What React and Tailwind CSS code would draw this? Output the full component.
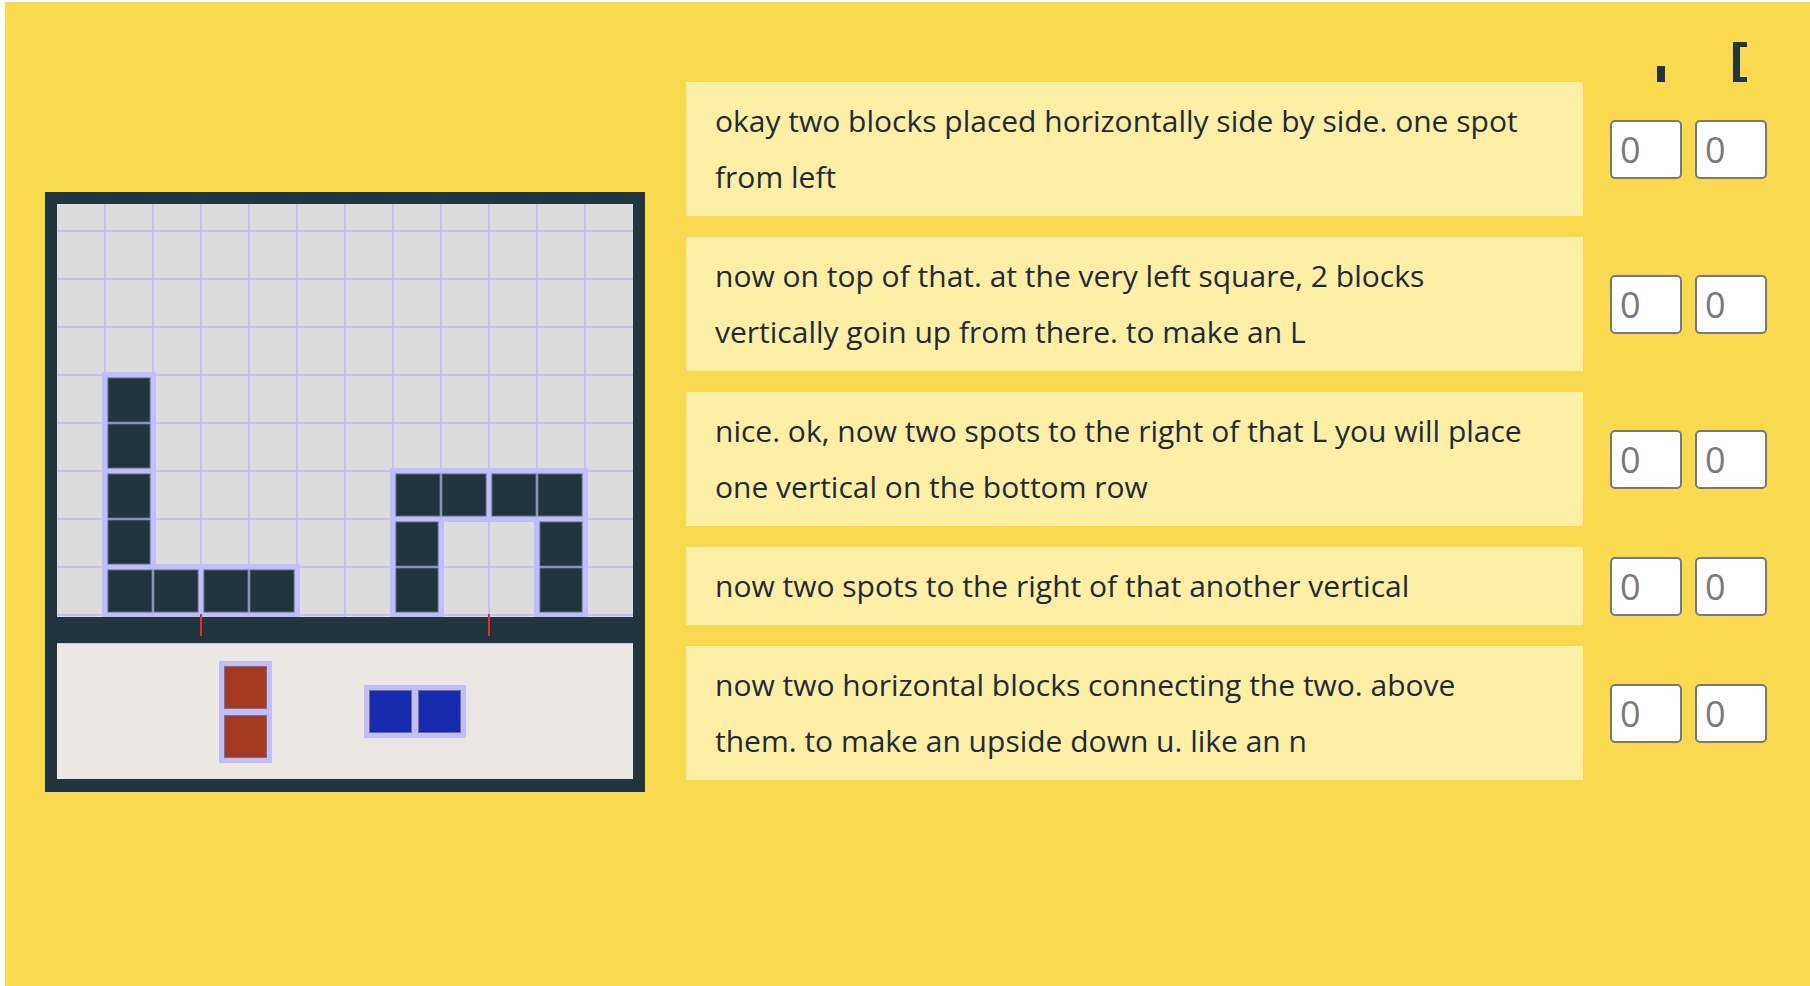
import { useState } from 'react'

const COLS = 12
const CELL = 48
const GRID_W = 576
const GRID_H = 413
const TOP_OFFSET = -21

// pieces on the board: [col, row, horizontal]
const placed = [
  [1, 4, false],
  [1, 6, false],
  [1, 8, true],
  [3, 8, true],
  [7, 6, true],
  [9, 6, true],
  [7, 7, false],
  [10, 7, false],
]

const steps = [
  ['okay two blocks placed horizontally side by side. one spot', 'from left'],
  ['now on top of that. at the very left square, 2 blocks', 'vertically goin up from there. to make an L'],
  ['nice. ok, now two spots to the right of that L you will place', 'one vertical on the bottom row'],
  ['now two spots to the right of that another vertical'],
  ['now two horizontal blocks connecting the two. above', 'them. to make an upside down u. like an n'],
]

function Board() {
  const lines = []
  for (let i = 1; i < COLS; i++) {
    lines.push(<rect key={'v' + i} x={i * CELL - 1} y={0} width={2} height={GRID_H} fill="#c3c3f2" />)
  }
  for (let j = 0; j < 9; j++) {
    lines.push(<rect key={'h' + j} x={0} y={27 + j * CELL - 1} width={GRID_W} height={2} fill="#c3c3f2" />)
  }

  const outlines = placed.map(([c, r, horiz], i) => {
    const x = c * CELL
    const y = TOP_OFFSET + r * CELL
    const w = horiz ? CELL * 2 : CELL
    const h = horiz ? CELL : CELL * 2
    return <rect key={'o' + i} x={x - 3} y={y - 3} width={w + 6} height={h + 6} fill="#bfbff6" />
  })

  const cells = placed.map(([c, r, horiz], i) => {
    const x = c * CELL
    const y = TOP_OFFSET + r * CELL
    const a = horiz
      ? { x: x + 3, y: y + 3, width: 44, height: 42 }
      : { x: x + 3, y: y + 3, width: 42, height: 44 }
    const b = horiz
      ? { x: x + 49, y: y + 3, width: 44, height: 42 }
      : { x: x + 3, y: y + 49, width: 42, height: 44 }
    return (
      <g key={'c' + i}>
        <rect {...a} fill="#22343e" stroke="#5d6a80" strokeWidth="1" />
        <rect {...b} fill="#22343e" stroke="#5d6a80" strokeWidth="1" />
      </g>
    )
  })

  return (
    <svg width={GRID_W} height={GRID_H} className="block">
      <rect x="0" y="0" width={GRID_W} height={GRID_H} fill="#dcdcdc" />
      {lines}
      {outlines}
      {cells}
    </svg>
  )
}

function TrayPiece({ color, vertical }) {
  return (
    <div className={`flex gap-[6px] bg-[#bfbff6] p-[5px] ${vertical ? 'flex-col' : 'flex-row'}`}>
      <div className="h-[43px] w-[43px] border border-[#7a6a9a]" style={{ backgroundColor: color }} />
      <div className="h-[43px] w-[43px] border border-[#7a6a9a]" style={{ backgroundColor: color }} />
    </div>
  )
}

function NumberBox() {
  const [value, setValue] = useState('')
  return (
    <input
      type="text"
      value={value}
      onChange={(e) => setValue(e.target.value)}
      placeholder="0"
      className="h-[59px] w-[72px] rounded-[5px] border-2 border-[#787878] bg-white pl-[8px] text-[36px] leading-none text-[#333] outline-none placeholder:text-[#7a7a7a]"
      style={{ fontFamily: '"Open Sans", sans-serif' }}
    />
  )
}

export default function App() {
  return (
    <div className="min-h-screen bg-white pl-[5px] pt-[2px]" style={{ fontFamily: '"Open Sans", sans-serif' }}>
      <div className="flex h-[984px] bg-[#f9da4f] pl-[40px]">
        <div className="mt-[190px] self-start">
          <div className="w-[600px] bg-[#22343e] p-[12px] pb-[13px]">
            <Board />
            <div className="relative h-[26px]">
              <div className="absolute left-[143px] top-[-3px] h-[22px] w-[2px] bg-[#e0302a]" />
              <div className="absolute left-[431px] top-[-3px] h-[22px] w-[2px] bg-[#e0302a]" />
            </div>
            <div className="flex h-[136px] items-center gap-[92px] border-t border-[#c8c8ee] bg-[#ebe8e3] pl-[162px]">
              <TrayPiece color="#a53a1f" vertical />
              <TrayPiece color="#162bae" />
            </div>
          </div>
        </div>

        <div className="ml-[41px] mt-[40px] flex flex-col self-start">
          <div className="flex h-[40px] items-end">
            <div className="w-[897px]" />
            <div className="ml-[27px] w-[72px]">
              <div className="ml-[47px] h-[16px] w-[8px] bg-[#22343e]" />
            </div>
            <div className="ml-[13px] w-[72px]">
              <div className="ml-[38px] h-[40px] w-[14px] border-y-[5px] border-l-[7px] border-[#22343e]" />
            </div>
          </div>

          <div className="flex flex-col gap-[21px]">
            {steps.map((lines, i) => (
              <div key={i} className="flex items-center">
                <div className="w-[897px] whitespace-nowrap bg-[#fbefa6] py-[11px] pl-[29px] pr-[30px] text-[30px] leading-[56px] text-[#1f2b33]">
                  {lines.map((line, j) => (
                    <div key={j}>{line}</div>
                  ))}
                </div>
                <div className="ml-[27px] flex gap-[13px]">
                  <NumberBox />
                  <NumberBox />
                </div>
              </div>
            ))}
          </div>
        </div>
      </div>
    </div>
  )
}
